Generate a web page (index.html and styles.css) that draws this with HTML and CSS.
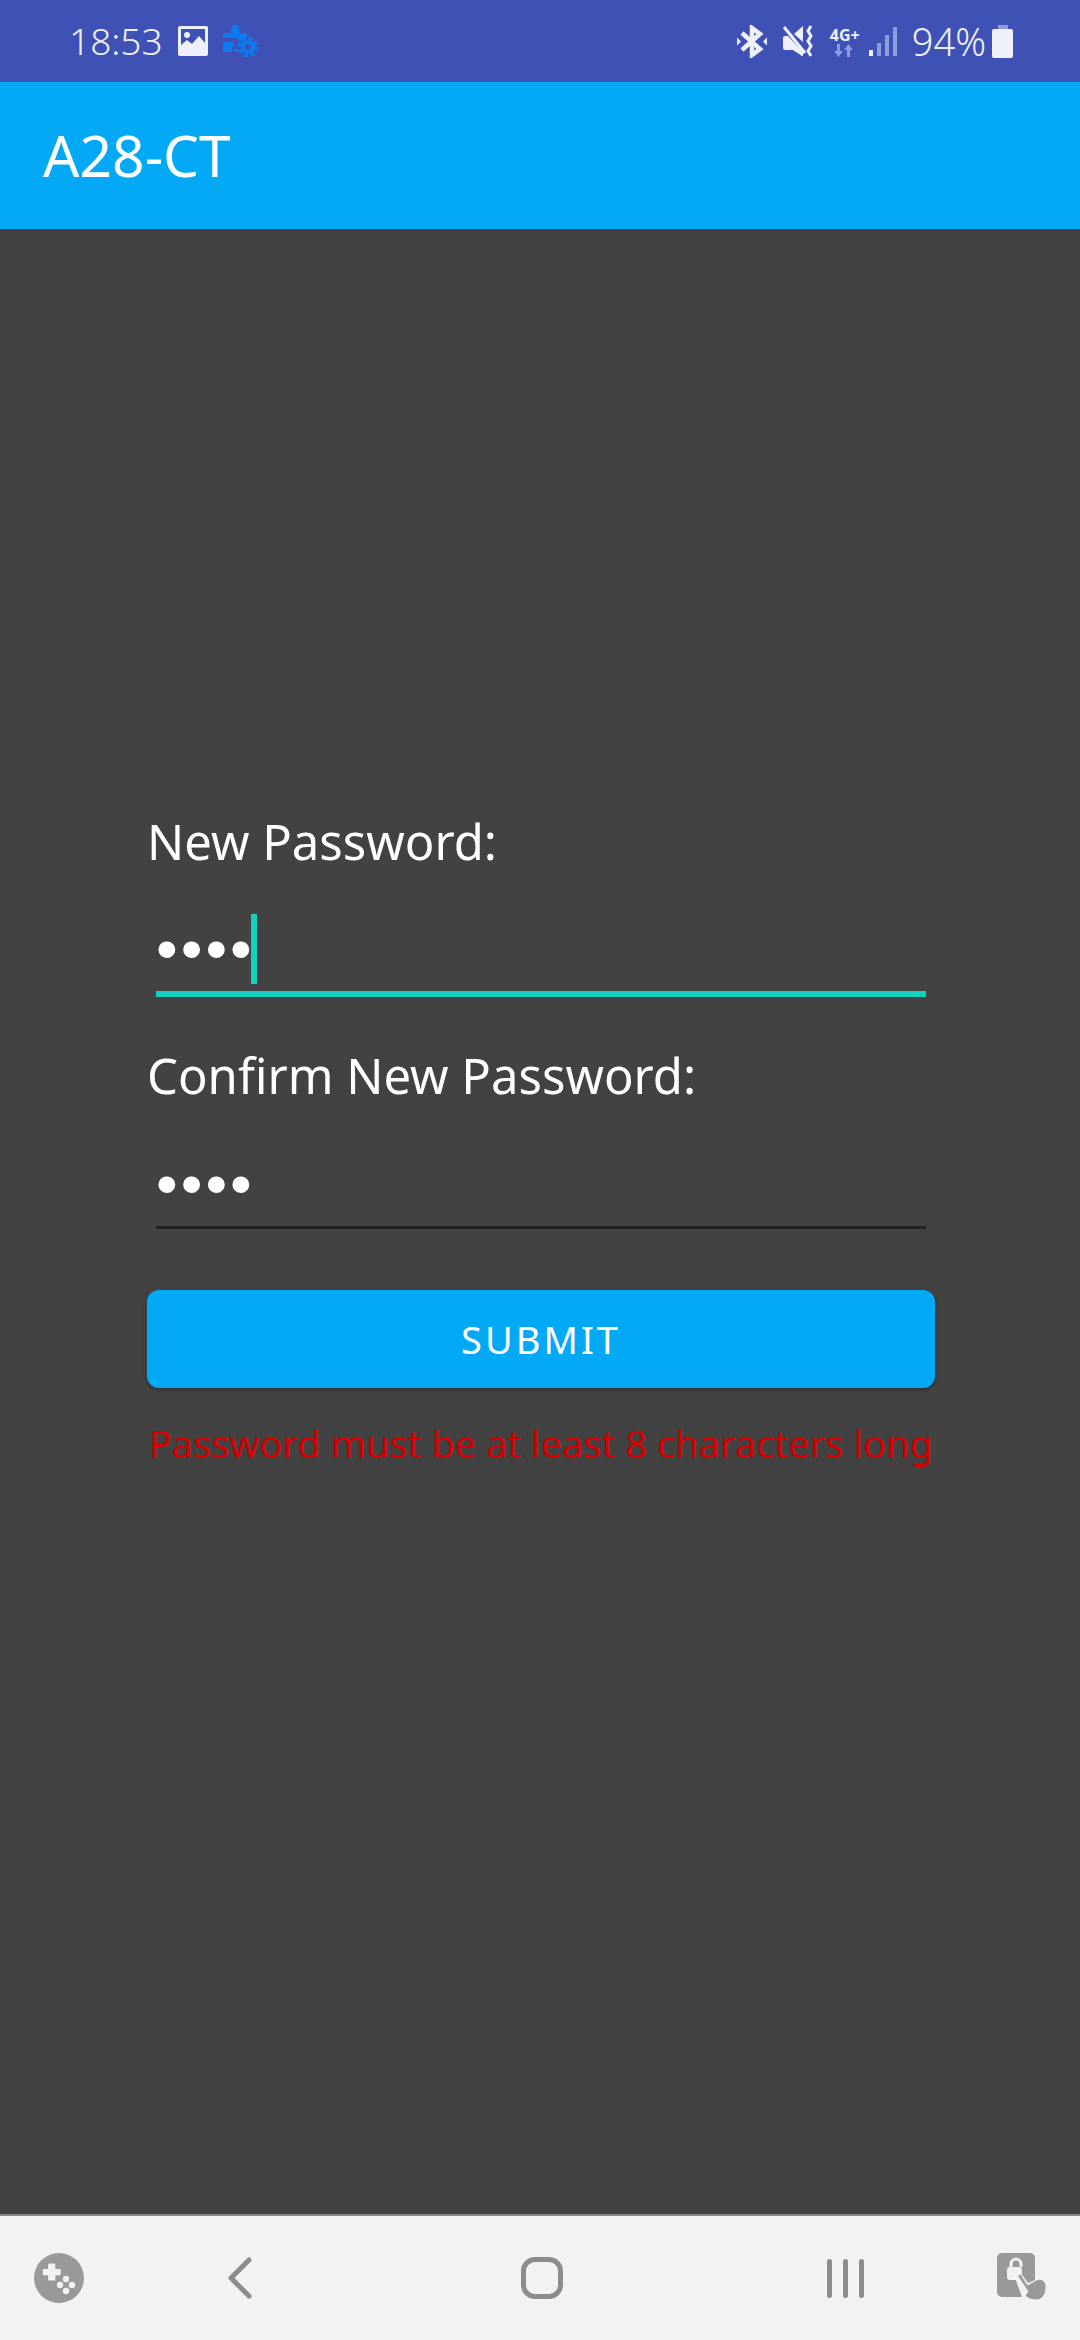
FILE: index.html
```html
<!DOCTYPE html>
<html lang="en">
<head>
    <meta charset="UTF-8">
    <meta name="viewport" content="width=device-width, initial-scale=1.0">
    <title>A28-CT</title>
    <link rel="stylesheet" href="styles.css">
</head>
<body>
    <div class="status-bar">
        <span class="clock">18:53</span>
        <svg class="icon-picture" width="32" height="30" viewBox="0 0 32 30">
            <path fill="#eef0fa" fill-rule="evenodd" d="M3 0h26a2 2 0 0 1 2 2v26a2 2 0 0 1-2 2H3a2 2 0 0 1-2-2V2a2 2 0 0 1 2-2zM4 3v16l6-5 5 4 7-8 6 7V3z"/>
            <circle cx="10" cy="9" r="3" fill="#eef0fa"/>
        </svg>
        <svg class="icon-puzzle" width="36" height="34" viewBox="0 0 36 34">
            <path fill="#0a7bf0" d="M0 9h8V5a4 4 0 0 1 8 0v4h8v5a8 8 0 0 0-7 6h-1v-3a3 3 0 0 0-3-3H0zM0 18h9a2.500 2.500 0 0 1 0 5v5H0z"/>
            <path fill="#0a7bf0" d="M11 25h4v3h-4z"/>
            <circle cx="25" cy="23" r="5" fill="none" stroke="#0a7bf0" stroke-width="4"/>
            <circle cx="25" cy="23" r="8.500" fill="none" stroke="#0a7bf0" stroke-width="3.500" stroke-dasharray="3.800 2.900"/>
        </svg>
        <div class="status-right">
            <svg class="icon-bt" width="30" height="33" viewBox="0 0 30 33">
                <path fill="none" stroke="#eef0fa" stroke-width="4.500" d="M5 8l18 16-8 6V3l8 6L5 25"/>
                <path fill="#eef0fa" d="M0 12.500l4 4-4 4zM30 12.500l-4 4 4 4z"/>
            </svg>
            <svg class="icon-mute" width="33" height="33" viewBox="0 0 33 33">
                <path fill="#eef0fa" d="M1 13a2 2 0 0 1 2-2h3l15 16v4h-1l-9-6H3a2 2 0 0 1-2-2zM12 9l9-8v16z"/>
                <path fill="none" stroke="#eef0fa" stroke-width="3" d="M2 2l21 26"/>
                <path fill="none" stroke="#eef0fa" stroke-width="3" d="M29 1l-3 5 3 5-3 5 3 5-3 5 3 5"/>
            </svg>
            <div class="net">
                <span class="net-label">4G+</span>
                <svg width="24" height="13" viewBox="0 0 24 13">
                    <path fill="#8f9cdc" d="M4 0h3v7h3l-4.500 6L1 7h3zM17 13h-3V6h-3l4.500-6L20 6h-3z"/>
                </svg>
            </div>
            <svg class="icon-signal" width="29" height="33" viewBox="0 0 29 33">
                <rect x="0" y="25" width="4" height="6" fill="#eef0fa"/>
                <rect x="8" y="18" width="4" height="13" fill="#8f9cdc"/>
                <rect x="16" y="10" width="4" height="21" fill="#8f9cdc"/>
                <rect x="24" y="2" width="4" height="29" fill="#8f9cdc"/>
            </svg>
            <span class="battery-text">94%</span>
            <div class="battery"><div class="battery-cap"></div><div class="battery-body"></div></div>
        </div>
    </div>

    <header class="app-bar">
        <h1>A28-CT</h1>
    </header>

    <main class="content">
        <form class="form">
            <label class="field-label">New Password:</label>
            <div class="field field-active">
                <span class="dots">••••</span><span class="caret"></span>
            </div>
            <label class="field-label field-label-second">Confirm New Password:</label>
            <div class="field">
                <span class="dots">••••</span>
            </div>
            <button type="button" class="submit">SUBMIT</button>
            <p class="error">Password must be at least 8 characters long</p>
        </form>
    </main>

    <nav class="nav-bar">
        <svg width="50" height="50" viewBox="0 0 50 50">
            <circle cx="25" cy="25" r="25" fill="#999"/>
            <path fill="#f2f2f2" d="M15 10h6a1 1 0 0 1 1 1v5h5a1 1 0 0 1 1 1v5a1 1 0 0 1-1 1h-5v5a1 1 0 0 1-1 1h-6a1 1 0 0 1-1-1v-5H9a1 1 0 0 1-1-1v-5a1 1 0 0 1 1-1h5v-5a1 1 0 0 1 1-1z" transform="translate(1.500 1.500) scale(.9)"/>
            <circle cx="32" cy="26" r="3.200" fill="#f2f2f2"/>
            <circle cx="26" cy="32" r="3.200" fill="#f2f2f2"/>
            <circle cx="38" cy="32" r="3.200" fill="#f2f2f2"/>
            <circle cx="32" cy="38" r="3.200" fill="#f2f2f2"/>
        </svg>
        <svg width="24" height="42" viewBox="0 0 24 42">
            <path fill="none" stroke="#8c8c8c" stroke-width="5" stroke-linecap="round" stroke-linejoin="round" d="M21 3L3 21l18 18"/>
        </svg>
        <div class="home-btn"></div>
        <div class="recents"><span></span><span></span><span></span></div>
        <svg width="50" height="50" viewBox="0 0 50 50">
            <rect x="0" y="0" width="38" height="44" rx="5" fill="#999"/>
            <path fill="none" stroke="#f2f2f2" stroke-width="3" d="M14 14v-3a5 5 0 0 1 10 0v3"/>
            <rect x="10" y="14" width="15" height="13" rx="3" fill="#f2f2f2"/>
            <path fill="#f2f2f2" d="M17 22l6-3 8 11 12-5 7 8-2 12-10 5-13-6z"/>
            <path fill="#999" d="M21 23l2.500-1.500 7 11 9-5a6 6 0 0 1 9 5c.5 8-3 14-9 14-4 0-8-1-11-4l3-4z"/>
        </svg>
    </nav>
</body>
</html>
```

FILE: styles.css
```css
* {
    box-sizing: border-box;
}

body {
    font-family: "Noto Sans", Arial, sans-serif;
    margin: 0;
    padding: 0;
    width: 1080px;
    height: 2340px;
    display: flex;
    flex-direction: column;
    background-color: #424242;
    color: #fff;
}

/* status bar */
.status-bar {
    height: 82px;
    background-color: #3f51b5;
    color: #eef0fa;
    display: flex;
    align-items: center;
    padding: 0 67px 0 69px;
    flex-shrink: 0;
}

.clock {
    font-size: 37px;
    font-weight: 300;
    line-height: 82px;
    margin-right: 14px;
}

.icon-picture {
    margin-right: 14px;
}

.status-right {
    margin-left: auto;
    display: flex;
    align-items: center;
}

.icon-bt {
    margin-right: 15px;
}

.icon-mute {
    margin-right: 14px;
}

.net {
    width: 32px;
    margin-right: 8px;
    display: flex;
    flex-direction: column;
    align-items: center;
}

.net-label {
    font-size: 16px;
    line-height: 18px;
    font-weight: 700;
}

.icon-signal {
    margin-right: 14px;
}

.battery-text {
    font-size: 38px;
    font-weight: 300;
    line-height: 82px;
    margin-right: 6px;
}

.battery {
    width: 21px;
    display: flex;
    flex-direction: column;
    align-items: center;
}

.battery-cap {
    width: 10px;
    height: 4px;
    background-color: #8f9cdc;
}

.battery-body {
    width: 21px;
    height: 29px;
    border-radius: 2px;
    background-color: #eef0fa;
}

/* app bar */
.app-bar {
    height: 147px;
    background-color: #03a9f4;
    padding: 0 43px;
    display: flex;
    align-items: center;
    flex-shrink: 0;
}

.app-bar h1 {
    margin: 0;
    font-size: 57px;
    font-weight: 400;
    line-height: 1;
}

/* form */
.content {
    flex: 1;
    padding: 580px 145px 0 147px;
}

.form {
    display: flex;
    flex-direction: column;
}

.field-label {
    font-size: 49px;
    font-weight: 400;
    line-height: 64px;
}

.field-label-second {
    margin-top: 46px;
}

.field {
    height: 122px;
    margin: 0 9px;
    display: flex;
    align-items: flex-end;
    border-bottom: 3px solid #222;
}

.field-active {
    border-bottom: 6px solid #14d0bf;
    height: 124px;
}

.dots {
    font-family: "Liberation Sans", Arial, sans-serif;
    font-size: 62px;
    line-height: 84px;
    letter-spacing: 3px;
}

.caret {
    width: 6px;
    height: 70px;
    margin-bottom: 7px;
    margin-left: -4px;
    background-color: #14d0bf;
}

.submit {
    margin-top: 61px;
    padding-left: 6px;
    height: 98px;
    border: 0;
    border-radius: 12px;
    background-color: #03a9f4;
    color: #fff;
    font-family: "Noto Sans", Arial, sans-serif;
    font-size: 38px;
    letter-spacing: 3px;
    box-shadow: 0 2px 4px rgba(0, 0, 0, .3);
}

.error {
    margin: 29px 0 0;
    text-align: center;
    color: #d50000;
    font-size: 38px;
    line-height: 52px;
    white-space: nowrap;
}

/* bottom nav */
.nav-bar {
    height: 126px;
    flex-shrink: 0;
    background-color: #f2f2f2;
    border-top: 2px solid #888;
    display: grid;
    grid-template-columns: 118px 244px 360px 246px 108px;
    justify-items: center;
    align-items: center;
}

.home-btn {
    width: 42px;
    height: 42px;
    border: 5px solid #8c8c8c;
    border-radius: 14px;
}

.recents {
    display: flex;
    gap: 11px;
}

.recents span {
    width: 5px;
    height: 39px;
    border-radius: 3px;
    background-color: #8c8c8c;
}
```
